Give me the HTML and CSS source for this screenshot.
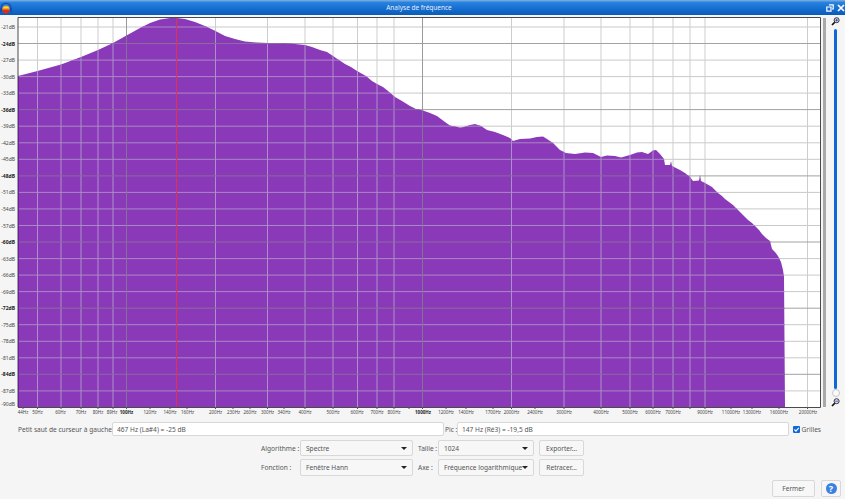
FILE: index.html
```html
<!DOCTYPE html>
<html lang="fr">
<head>
  <meta charset="UTF-8" />
  <title>Analyse de fréquence</title>
  <link rel="stylesheet" href="styles.css">
</head>
<body>
  <div class="titlebar">
    <svg class="app-icon" width="12" height="12" viewBox="0 0 12 12">
      <path d="M1.2 7.4V6a4.8 4.8 0 0 1 9.6 0v1.4" fill="none" stroke="#1a4cc4" stroke-width="1.6"/>
      <circle cx="6" cy="7" r="3.6" fill="#f2a81e"/>
      <path d="M2.4 7.4h7.2v.4a3.6 3.6 0 0 1-7.2 0z" fill="#e22a1a"/>
      <path d="M3.8 4.8h4.4v1.2H3.8z" fill="#f8e030"/>
      <path d="M.3 6.2h1.7v3.6H.3zM10 6.2h1.7v3.6H10z" fill="#1a3fb0"/>
    </svg>
    <span class="title">Analyse de fréquence</span>
    <span class="win-buttons">
      <svg width="8" height="8" viewBox="0 0 8 8"><path d="M3 .8h4.2V5H6M.8 3H5v4.2H.8z" fill="none" stroke="#fff" stroke-width="1.2"/></svg>
      <svg width="8" height="8" viewBox="0 0 8 8"><path d="M1 1l6 6M7 1L1 7" stroke="#fff" stroke-width="1.7"/></svg>
    </span>
  </div>

  <div class="main">
    <svg class="plot" width="822" height="403" viewBox="0 15 822 403">
      <defs>
        <clipPath id="spectrumClip">
          <path d="M18 76L37.5 71L61 64.5L81 57L98 50L113 43L126.5 35.5L140 28L150 23L160 19.5L170 18L177 18L185 19L195 22L205 26L215.5 31L225 36L235 39L245 41.5L257 42.5L268 43L280 43L295 44L305 45L312 47L320 50L327 52L333 56L339 60L345 64L351 67L357 71L366 76L372 81L377 84L383 87L388 91L395 97L402 101L410 106L416 109L423 110.5L430 113L437 116L441 119L445 122L450 125.5L455 126.5L460 127.5L464 127L470 125L475 124L481 126L487 130L495 132L503 135L510 138L513 141L520 139L530 138.5L537 137L543 136.5L547 139L553 143L557 147L560 150L566 153L575 154L585 152.5L593 153L601 157L607 155.5L615 156L621 157.5L630 155L637 152.5L642 152L648 154L653 150.5L656 150L660 154L664 159L665 165L670 165L671 161L672 166L680 170L685 173L690 177L693 181L699 180.5L700 175L701 181L705 183L712 187L718 193L722 196L725 199L729 202L733 205L736 208L740 212L744 216L748 220L752 223L755 226L759 230L762 234L766 238L770 241L772 249L775 252L778 256L781 262L783 270L784 277L785 407L18 407Z"/>
        </clipPath>
        <g id="minorH"><path d="M18 27H820M18 60.1H820M18 76.6H820M18 93.1H820M18 126.2H820M18 142.8H820M18 159.3H820M18 192.4H820M18 208.9H820M18 225.5H820M18 258.6H820M18 275.1H820M18 291.6H820M18 324.7H820M18 341.3H820M18 357.8H820M18 390.9H820"/></g>
        <g id="majorH"><path d="M18 43.5H820M18 109.6H820M18 175.9H820M18 242H820M18 308.2H820M18 374.3H820"/></g>
        <g id="minorV"><path d="M37.5 17V407M61 17V407M81 17V407M98 17V407M113 17V407M215.5 17V407M267.5 17V407M305 17V407M333 17V407M357.5 17V407M377 17V407M394 17V407M511.5 17V407M564 17V407M601 17V407M630 17V407M653 17V407M673 17V407M690 17V407M705 17V407M807.5 17V407"/></g>
        <g id="majorV"><path d="M126.5 17V407M422.5 17V407"/></g>
      </defs>

      <rect x="18" y="17" width="802" height="390" fill="#fff"/>

      <!-- grid on white -->
      <use href="#minorH" stroke="#c9c9c9"/>
      <use href="#minorV" stroke="#cdcdcd"/>
      <use href="#majorH" stroke="#a2a2a2"/>
      <use href="#majorV" stroke="#9a9a9a"/>

      <!-- spectrum -->
      <rect x="18" y="17" width="767" height="390" fill="#8a3ab9" clip-path="url(#spectrumClip)"/>
      <rect x="820" y="372" width="1" height="35" fill="#8a3ab9"/>
      <g clip-path="url(#spectrumClip)">
        <use href="#minorH" stroke="#a988c4"/>
        <use href="#minorV" stroke="#ae90c8"/>
        <use href="#majorH" stroke="#8b6a9e"/>
        <use href="#majorV" stroke="#84709a"/>
      </g>

      <path d="M176.5 17V407" stroke="#e5304c"/>
      <path d="M18 407V17.5H820.5V407.5H18" fill="none" stroke="#4a4a4a"/>
      <path d="M18.5 76V407" stroke="#6a1f9e"/>
      <path d="M23 407v2M37.5 407v2M61 407v2M81 407v2M98 407v2M113 407v2M126.5 407v2M150 407v2M170 407v2M187 407v2M215.5 407v2M233 407v2M250 407v2M267.5 407v2M284 407v2M305 407v2M333 407v2M357.5 407v2M377 407v2M394 407v2M409 407v2M422.5 407v2M446 407v2M466 407v2M493 407v2M511.5 407v2M535 407v2M564 407v2M601 407v2M630 407v2M653 407v2M673 407v2M690 407v2M705 407v2M731 407v2M752 407v2M779 407v2M807.5 407v2" stroke="#555"/>

      <g class="db-labels">
        <text x="15" y="29">-21dB</text>
        <text x="15" y="45.5" class="major">-24dB</text>
        <text x="15" y="62">-27dB</text>
        <text x="15" y="78.6">-30dB</text>
        <text x="15" y="95">-33dB</text>
        <text x="15" y="111.6" class="major">-36dB</text>
        <text x="15" y="128">-39dB</text>
        <text x="15" y="144.8">-42dB</text>
        <text x="15" y="161.3">-45dB</text>
        <text x="15" y="177.9" class="major">-48dB</text>
        <text x="15" y="194.4">-51dB</text>
        <text x="15" y="210.9">-54dB</text>
        <text x="15" y="227.5">-57dB</text>
        <text x="15" y="244" class="major">-60dB</text>
        <text x="15" y="260.6">-63dB</text>
        <text x="15" y="277.1">-66dB</text>
        <text x="15" y="293.6">-69dB</text>
        <text x="15" y="310.2" class="major">-72dB</text>
        <text x="15" y="326.7">-75dB</text>
        <text x="15" y="343.3">-78dB</text>
        <text x="15" y="359.8">-81dB</text>
        <text x="15" y="376.3" class="major">-84dB</text>
        <text x="15" y="392.9">-87dB</text>
        <text x="15" y="406">-90dB</text>
      </g>
      <g class="hz-labels">
        <text x="23" y="414">44Hz</text>
        <text x="37.5" y="414">50Hz</text>
        <text x="60.5" y="414">60Hz</text>
        <text x="81" y="414">70Hz</text>
        <text x="98" y="414">80Hz</text>
        <text x="112" y="414">89Hz</text>
        <text x="126.5" y="414" class="major">100Hz</text>
        <text x="150" y="414">120Hz</text>
        <text x="170" y="414">140Hz</text>
        <text x="187.5" y="414">160Hz</text>
        <text x="215.5" y="414">200Hz</text>
        <text x="233.5" y="414">230Hz</text>
        <text x="250" y="414">260Hz</text>
        <text x="267.5" y="414">300Hz</text>
        <text x="284" y="414">340Hz</text>
        <text x="305" y="414">400Hz</text>
        <text x="333" y="414">500Hz</text>
        <text x="357" y="414">600Hz</text>
        <text x="377" y="414">700Hz</text>
        <text x="394" y="414">800Hz</text>
        <text x="423" y="414" class="major">1000Hz</text>
        <text x="446" y="414">1200Hz</text>
        <text x="466" y="414">1400Hz</text>
        <text x="493" y="414">1700Hz</text>
        <text x="511.5" y="414">2000Hz</text>
        <text x="535" y="414">2400Hz</text>
        <text x="564" y="414">3000Hz</text>
        <text x="601" y="414">4000Hz</text>
        <text x="630" y="414">5000Hz</text>
        <text x="653" y="414">6000Hz</text>
        <text x="673" y="414">7000Hz</text>
        <text x="705" y="414">9000Hz</text>
        <text x="731" y="414">11000Hz</text>
        <text x="752" y="414">13000Hz</text>
        <text x="779" y="414">16000Hz</text>
        <text x="808" y="414">20000Hz</text>
      </g>
    </svg>

    <div class="scroll-edge"></div>

    <div class="zoom-slider">
      <svg class="zoom-icon" width="9" height="9" viewBox="0 0 9 9"><path d="M1 8l3-3" stroke="#111" stroke-width="1.7"/><circle cx="5.6" cy="3.2" r="2.5" fill="#dfe4f5" stroke="#333"/><path d="M4.2 3.2h2.8M5.6 1.8v2.8" stroke="#2a3ab0" stroke-width=".8"/></svg>
      <div class="zoom-track"></div>
      <div class="zoom-thumb"></div>
      <svg class="zoom-icon" width="9" height="9" viewBox="0 0 9 9"><path d="M1 8l3-3" stroke="#111" stroke-width="1.7"/><circle cx="5.6" cy="3.2" r="2.5" fill="#dfe4f5" stroke="#333"/><path d="M4.2 3.2h2.8" stroke="#2a3ab0" stroke-width=".8"/></svg>
    </div>
  </div>

  <div class="controls">
    <div class="cursor-row">
      <label class="cursor-label">Petit saut de curseur à gauche :</label>
      <input class="field cursor-field" type="text" value="467 Hz (La#4) = -25 dB" />
      <label class="peak-label">Pic :</label>
      <input class="field peak-field" type="text" value="147 Hz (Ré3) = -19,5 dB" />
      <span class="check-box">
        <svg width="7" height="7" viewBox="0 0 8 8"><path d="M1.6 4l1.8 1.8L6.6 2.2" fill="none" stroke="#fff" stroke-width="1.3"/></svg>
      </span>
      <label class="check-label">Grilles</label>
    </div>

    <div class="options">
      <label class="opt-label first-label">Algorithme :</label>
      <div class="select-box"><span>Spectre</span></div>
      <label class="opt-label">Taille :</label>
      <div class="select-box"><span>1024</span></div>
      <button class="btn side-btn">Exporter...</button>

      <label class="opt-label first-label">Fonction :</label>
      <div class="select-box"><span>Fenêtre Hann</span></div>
      <label class="opt-label">Axe :</label>
      <div class="select-box"><span>Fréquence logarithmique</span></div>
      <button class="btn side-btn">Retracer...</button>
    </div>

    <div class="footer-row">
      <button class="btn close-btn">Fermer</button>
      <button class="btn help-btn"><span class="help-icon">?</span></button>
    </div>
  </div>
</body>
</html>
```

FILE: styles.css
```css
:root {
  --panel: #f5f5f5;
  --text: #555;
  --border: #d8d8d8;
}

* {
  box-sizing: border-box;
}

body {
  margin: 0;
  width: 845px;
  height: 499px;
  overflow: hidden;
  background: var(--panel);
  color: var(--text);
  font-family: "Noto Sans", sans-serif;
  font-size: 6.6px;
}

.titlebar {
  height: 15px;
  display: flex;
  align-items: center;
  background: linear-gradient(#6ea8e2 0, #6ea8e2 1px, #2a84de 2px, #1670d2 8px, #0b5ab8 15px);
}

.app-icon {
  flex: none;
}

.title {
  flex: 1;
  text-align: center;
  color: #e6eefa;
  font-size: 6.5px;
}

.win-buttons {
  display: flex;
  gap: 3px;
}

.main {
  display: flex;
  height: 403px;
}

.plot {
  display: block;
  flex: none;
}

.db-labels text {
  font-size: 5px;
  text-anchor: end;
  fill: #444;
}

.hz-labels text {
  font-size: 4.5px;
  text-anchor: middle;
  fill: #444;
}

.plot .major {
  font-weight: bold;
  fill: #222;
}

.scroll-edge {
  width: 3px;
  height: 389px;
  margin: 3px 0 0 1px;
  background: #a9a9a9;
}

.zoom-slider {
  width: 19px;
  display: flex;
  flex-direction: column;
  align-items: center;
  padding-top: 1px;
}

.zoom-icon {
  flex: none;
  margin-top: 1px;
}

.zoom-track {
  width: 3px;
  height: 360px;
  margin-top: 3px;
  background: #1068d8;
  border-radius: 2px;
}

.zoom-thumb {
  width: 8px;
  height: 8px;
  flex: none;
  border: 1px solid #c8c8c8;
  border-radius: 50%;
  background: #fafafa;
}

.controls {
  padding-top: 4px;
}

.cursor-row {
  display: flex;
  align-items: center;
  height: 14px;
  padding-left: 18px;
}

.cursor-label {
  width: 94px;
  white-space: nowrap;
}

.field {
  height: 14px;
  padding: 0 4px;
  border: 1px solid var(--border);
  border-radius: 2px;
  background: #fff;
  color: var(--text);
  font: 6.6px "Noto Sans", sans-serif;
}

.cursor-field {
  width: 332px;
}

.peak-label {
  width: 12px;
  margin-left: 1px;
  white-space: nowrap;
}

.peak-field {
  width: 332px;
}

.check-box {
  width: 7px;
  height: 7px;
  margin-left: 4px;
  display: flex;
  border-radius: 1px;
  background: #1068d8;
}

.check-label {
  margin-left: 1.5px;
}

.options {
  display: grid;
  grid-template-columns: 300px 113px 25px 96px 50px;
  grid-template-rows: 16px 17px;
  row-gap: 3px;
  margin-top: 4px;
}

.opt-label {
  align-self: center;
  padding-left: 5px;
  white-space: nowrap;
}

.first-label {
  padding-left: 261px;
}

.select-box {
  position: relative;
  display: flex;
  align-items: center;
  padding: 0 5px;
  border: 1px solid var(--border);
  border-radius: 2px;
  background: #f7f7f7;
  white-space: nowrap;
  overflow: hidden;
}

.select-box::after {
  content: "";
  position: absolute;
  right: 5px;
  top: 6px;
  border: 3px solid transparent;
  border-top-color: #222;
}

.btn {
  padding: 0;
  border: 1px solid var(--border);
  border-radius: 2px;
  background: #f7f7f7;
  color: var(--text);
  font: 6.6px "Noto Sans", sans-serif;
}

.side-btn {
  margin-left: 5px;
}

.footer-row {
  display: flex;
  justify-content: flex-end;
  gap: 6px;
  margin-top: 4px;
  padding-right: 4px;
}

.close-btn {
  width: 43px;
  height: 17px;
}

.help-btn {
  width: 20px;
  height: 17px;
  display: flex;
  align-items: center;
  justify-content: center;
}

.help-icon {
  width: 11px;
  height: 11px;
  border-radius: 50%;
  background: #3b82e0;
  color: #fff;
  font-size: 9px;
  font-weight: bold;
  line-height: 11px;
  text-align: center;
}
```
